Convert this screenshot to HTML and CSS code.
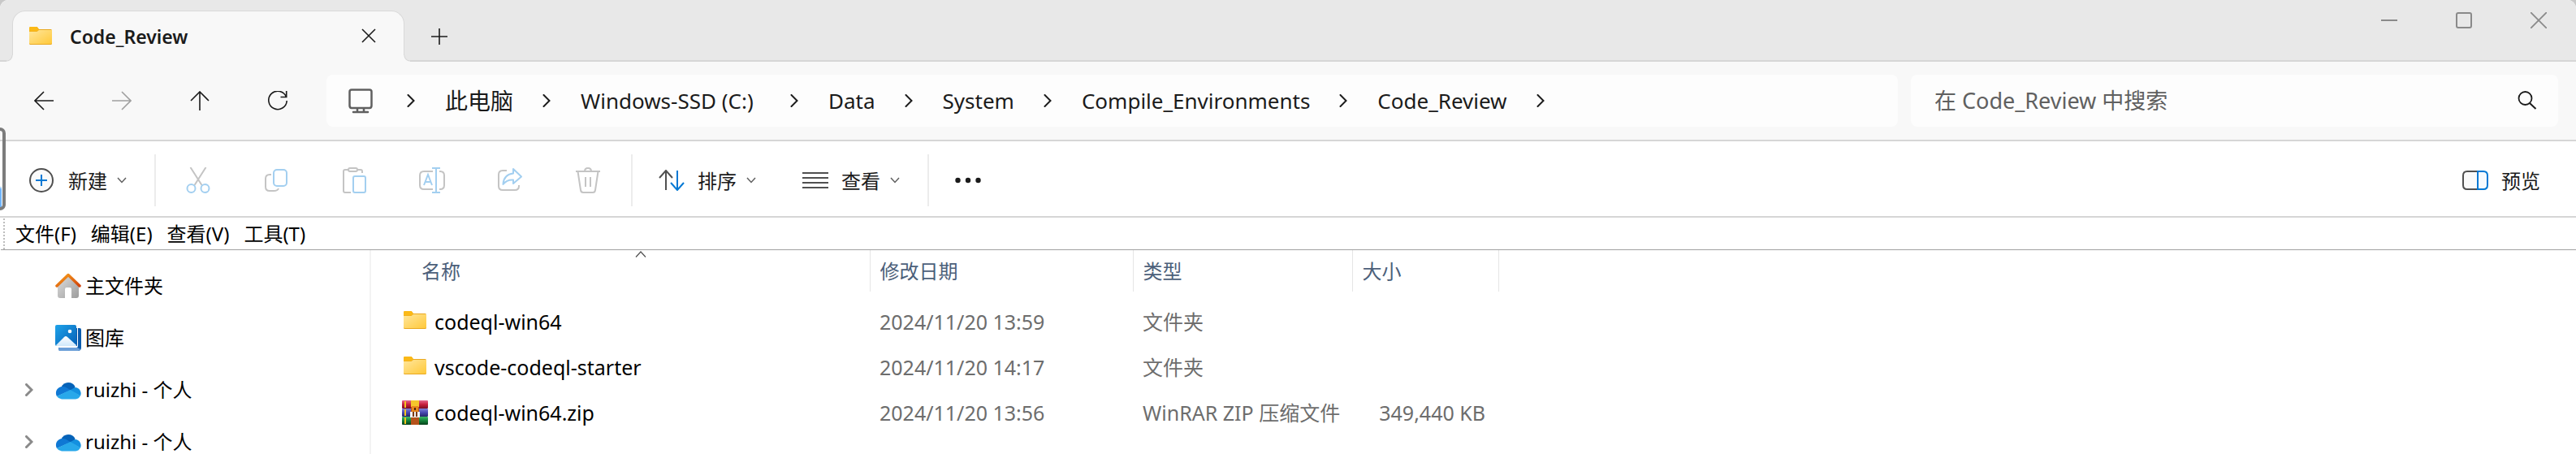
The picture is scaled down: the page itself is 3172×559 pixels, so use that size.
FILE: index.html
```html
<!DOCTYPE html>
<html lang="zh-CN">
<head>
<meta charset="utf-8">
<title>Code_Review</title>
<link rel="stylesheet" href="styles.css">
</head>
<body>
<svg class="defs" aria-hidden="true">
  <defs>
    <linearGradient id="g-folder" x1="0" y1="0" x2="1" y2="1"><stop offset="0" stop-color="#ffe69c"/><stop offset="1" stop-color="#ffc93a"/></linearGradient>
    <linearGradient id="g-roof" x1="0" y1="0" x2="1" y2="1"><stop offset="0" stop-color="#f9a11b"/><stop offset="1" stop-color="#d1430c"/></linearGradient>
    <linearGradient id="g-wall" x1="0" y1="0" x2="1" y2="1"><stop offset="0" stop-color="#dedede"/><stop offset="1" stop-color="#9c9c9c"/></linearGradient>
    <linearGradient id="g-photo" x1="0" y1="0" x2="1" y2="1"><stop offset="0" stop-color="#1fa3ea"/><stop offset="1" stop-color="#0560b6"/></linearGradient>
    <linearGradient id="g-hill" x1="0" y1="0" x2="0" y2="1"><stop offset="0" stop-color="#ffffff"/><stop offset="1" stop-color="#cfe8fb"/></linearGradient>
    <linearGradient id="g-red" x1="0" y1="0" x2="0" y2="1"><stop offset="0" stop-color="#e5668c"/><stop offset=".5" stop-color="#c81e3c"/><stop offset="1" stop-color="#7a0d22"/></linearGradient>
    <linearGradient id="g-blue" x1="0" y1="0" x2="0" y2="1"><stop offset="0" stop-color="#8080d8"/><stop offset=".5" stop-color="#4848b0"/><stop offset="1" stop-color="#26266a"/></linearGradient>
    <linearGradient id="g-green" x1="0" y1="0" x2="0" y2="1"><stop offset="0" stop-color="#3fb868"/><stop offset=".5" stop-color="#138038"/><stop offset="1" stop-color="#07401a"/></linearGradient>
    <symbol id="folder" viewBox="0 0 28 22">
      <path d="M0 1.500Q0 0 1.500 0H9.500L12 3H26.500Q28 3 28 4.500V20.500Q28 22 26.500 22H1.500Q0 22 0 20.500Z" fill="#e9a820"/>
      <path d="M0 1.500Q0 0 1.500 0H9.500Q11.500 1 11.500 3.500Q11 5 9.500 5.500H0Z" fill="#fbb917"/>
      <path d="M0 6H9.500L12 4H28V20Q28 21 26.500 21H1.500Q0 21 0 20Z" fill="url(#g-folder)"/>
    </symbol>
    <symbol id="cloud" viewBox="0 0 32 22">
      <path d="M7.500 7A9.500 9.500 0 0 1 24.500 6.500L22 14L12 12Z" fill="#0562b8"/>
      <path d="M8 6.500A8 8 0 0 0 2 18.500L19 11L13.500 7.500A9 9 0 0 0 8 6.500Z" fill="#0f78d4"/>
      <path d="M18 11L24.500 7.500A7.500 7.500 0 0 1 31 18Z" fill="#1490df"/>
      <path d="M2 18.500L18.500 10.500L31 17.500A7 7 0 0 1 25 22H8A8 8 0 0 1 2 18.500Z" fill="#28a8ea"/>
    </symbol>
    <symbol id="chev-right" viewBox="0 0 10 16"><path d="M1.500 1L8.500 8L1.500 15" fill="none" stroke="currentColor" stroke-width="2" stroke-linecap="round"/></symbol>
    <symbol id="chev-bold" viewBox="0 0 10 16"><path d="M1.500 1.500L8 8L1.500 14.500" fill="none" stroke="currentColor" stroke-width="3" stroke-linecap="round"/></symbol>
    <symbol id="chev-down" viewBox="0 0 12 8"><path d="M1 1L6 6.500L11 1" fill="none" stroke="currentColor" stroke-width="1.500"/></symbol>
  </defs>
</svg>

<div class="window">
  <header class="titlebar">
    <div class="tab">
      <svg class="folder-icon"><use href="#folder"/></svg>
      <span class="tab-title">Code_Review</span>
      <button class="tab-close" aria-label="关闭标签页"><svg width="18" height="18" viewBox="0 0 18 18"><path d="M1 1L17 17M17 1L1 17" stroke="#1b1b1b" stroke-width="1.600"/></svg></button>
    </div>
    <button class="tab-add" aria-label="新标签页"><svg width="20" height="20" viewBox="0 0 20 20"><path d="M10 0V20M0 10H20" stroke="#1b1b1b" stroke-width="1.600"/></svg></button>
    <div class="caption-buttons">
      <button aria-label="最小化"><svg width="20" height="20" viewBox="0 0 20 20"><path d="M0 10H20" stroke="#8a8a8a" stroke-width="2"/></svg></button>
      <button aria-label="最大化"><svg width="20" height="20" viewBox="0 0 20 20"><rect x="1" y="1" width="18" height="18" rx="2" fill="none" stroke="#8a8a8a" stroke-width="2"/></svg></button>
      <button aria-label="关闭"><svg width="20" height="20" viewBox="0 0 20 20"><path d="M0 0L20 20M20 0L0 20" stroke="#8a8a8a" stroke-width="1.800"/></svg></button>
    </div>
  </header>

  <div class="navbar">
    <div class="nav-buttons">
      <button aria-label="后退"><svg width="24" height="24" viewBox="0 0 24 24"><path d="M24 12H1M12 1L1 12L12 23"/></svg></button>
      <button aria-label="前进" disabled><svg width="24" height="24" viewBox="0 0 24 24"><path d="M0 12H23M12 1L23 12L12 23"/></svg></button>
      <button aria-label="向上"><svg width="24" height="24" viewBox="0 0 24 24"><path d="M12 24V1M1 12L12 1L23 12"/></svg></button>
      <button aria-label="刷新"><svg width="24" height="24" viewBox="0 0 24 24"><path d="M22.500 7.500A11.200 11.200 0 1 0 23.200 12M22.700 0V7.500H15.500"/></svg></button>
    </div>
    <nav class="address">
      <svg class="monitor" width="30" height="31" viewBox="0 0 30 31"><path d="M4 1.500H26Q28.500 1.500 28.500 4V21Q28.500 24 26 24H4Q1.500 24 1.500 21V4Q1.500 1.500 4 1.500ZM11 24V29M19 24V29M6 29H24" fill="none" stroke="#606060" stroke-width="2.500" stroke-linecap="round"/></svg>
      <svg class="sep"><use href="#chev-right"/></svg>
      <a class="crumb crumb-pc" href="#">此电脑</a>
      <svg class="sep"><use href="#chev-right"/></svg>
      <a class="crumb crumb-drive" href="#">Windows-SSD (C:)</a>
      <svg class="sep"><use href="#chev-right"/></svg>
      <a class="crumb" href="#">Data</a>
      <svg class="sep"><use href="#chev-right"/></svg>
      <a class="crumb" href="#">System</a>
      <svg class="sep"><use href="#chev-right"/></svg>
      <a class="crumb" href="#">Compile_Environments</a>
      <svg class="sep"><use href="#chev-right"/></svg>
      <a class="crumb" href="#">Code_Review</a>
      <svg class="sep"><use href="#chev-right"/></svg>
    </nav>
    <div class="search">
      <input type="text" aria-label="搜索" placeholder="在 Code_Review 中搜索">
      <svg width="24" height="24" viewBox="0 0 24 24"><circle cx="9.500" cy="9" r="8" fill="none" stroke="#1b1b1b" stroke-width="1.800"/><path d="M15 15L22.500 22" stroke="#1b1b1b" stroke-width="2"/></svg>
    </div>
  </div>

  <div class="toolbar">
    <button class="tool-new"><svg width="32" height="30" viewBox="0 0 32 30"><circle cx="15" cy="15" r="14" fill="#fafafa" stroke="#505050" stroke-width="2"/><path d="M15 8V22M8 15H22" stroke="#0078d4" stroke-width="2"/></svg><span>新建</span><svg class="caret"><use href="#chev-down"/></svg></button>
    <div class="tool-icons">
      <button disabled aria-label="剪切"><svg width="32" height="32" viewBox="0 0 32 32"><path d="M6.500 0L20.500 22M25.500 0L11.500 22" class="gray"/><circle cx="7.500" cy="26" r="5" class="blue"/><circle cx="24.500" cy="26" r="5" class="blue"/></svg></button>
      <button disabled aria-label="复制"><svg width="32" height="32" viewBox="0 0 32 32"><path d="M10 9H8Q3 9 3 14V24Q3 29 8 29H13Q18 29 19 26" class="gray"/><rect x="13" y="3" width="16" height="20" rx="4" class="blue"/></svg></button>
      <button disabled aria-label="粘贴"><svg width="32" height="32" viewBox="0 0 32 32"><path d="M9 3H5Q3 3 3 5V29Q3 31 5 31H12M20 3H24Q26 3 26 5V7" class="gray"/><rect x="9" y="1" width="11" height="4" rx="2" class="gray"/><rect x="15" y="11" width="15" height="20" rx="2" class="blue"/></svg></button>
      <button disabled aria-label="重命名"><svg width="32" height="32" viewBox="0 0 32 32"><path d="M17 5H6Q1 5 1 10V22Q1 27 6 27H17M25 5H26Q31 5 31 10V22Q31 27 26 27H25" class="gray"/><path d="M16 1H26M21 1V31M16 31H26M6 22L11 9L16 22M8 18H14" class="blue"/></svg></button>
      <button disabled aria-label="共享"><svg width="32" height="32" viewBox="0 0 32 32"><path d="M12 4H7Q2 4 2 9V23Q2 28 7 28H22Q27 28 27 23V22" class="gray"/><path d="M20 2L30 11.500L20 20V15.500Q12 15 7.500 21Q8 9 20 7.500Z" class="blue" stroke-linejoin="round"/></svg></button>
      <button disabled aria-label="删除"><svg width="32" height="32" viewBox="0 0 32 32"><path d="M1 5H31M3.500 5L7 28Q7.500 31 10 31H22Q24.500 31 25 28L28.500 5M12 5Q12 1 16 1T20 5M13 12V24M19 12V24" class="gray"/></svg></button>
    </div>
    <div class="tool-views">
      <button><svg width="32" height="26" viewBox="0 0 32 26"><path d="M9 25V1M1 10L9 1L17 10" fill="none" stroke="#505050" stroke-width="2"/><path d="M23 1V25M15 16L23 25L31 16" fill="none" stroke="#0078d4" stroke-width="2"/></svg><span>排序</span><svg class="caret"><use href="#chev-down"/></svg></button>
      <button><svg width="32" height="20" viewBox="0 0 32 20"><path d="M0 1H32M0 7H32M0 13H32M0 19H32" stroke="#505050" stroke-width="2"/></svg><span>查看</span><svg class="caret"><use href="#chev-down"/></svg></button>
    </div>
    <button class="tool-more" aria-label="查看更多"><svg width="32" height="8" viewBox="0 0 32 8"><g fill="#1b1b1b"><circle cx="3.500" cy="4" r="3.200"/><circle cx="16" cy="4" r="3.200"/><circle cx="28.500" cy="4" r="3.200"/></g></svg></button>
    <button class="tool-preview"><svg width="32" height="24" viewBox="0 0 32 24"><path d="M19 1H6Q1 1 1 6V18Q1 23 6 23H19" fill="#fafafa" stroke="#505050" stroke-width="2"/><path d="M19 1H26Q31 1 31 6V18Q31 23 26 23H19Z" fill="#f6fafe" stroke="#0078d4" stroke-width="2"/></svg><span>预览</span></button>
  </div>

  <div class="menubar">
    <button>文件(F)</button>
    <button>编辑(E)</button>
    <button>查看(V)</button>
    <button>工具(T)</button>
  </div>

  <div class="content">
    <aside class="tree">
      <a href="#"><span class="expander"></span><svg width="32" height="32" viewBox="0 0 32 32"><path d="M3 14L16 3L29 14V28Q29 31 26 31H20V20Q20 18 18 18H14Q12 18 12 20V31H6Q3 31 3 28Z" fill="url(#g-wall)"/><path d="M2 16L16 2.500L30 16" fill="none" stroke="url(#g-roof)" stroke-width="3.500" stroke-linecap="round" stroke-linejoin="round"/></svg><span>主文件夹</span></a>
      <a href="#"><span class="expander"></span><svg width="32" height="32" viewBox="0 0 32 32"><path d="M26 4H30Q32 4 32 6V28Q32 32 28 32H6Q4 32 4 29V28H26Z" fill="#0b5cad"/><path d="M4 29Q4 28 6 28H27L31 30Q30 32 28 32H6Q4 32 4 29Z" fill="#6b9fd8"/><path d="M0 26H27V4H28V26Q28 28 26 28H0Z" fill="#fff"/><rect width="26" height="26" rx="2" fill="url(#g-photo)"/><path d="M1 25L11 15Q13 13 15 15L26 25Q25 26 24 26H2Q1 26 1 25Z" fill="url(#g-hill)"/><circle cx="18" cy="8" r="2.300" fill="#fff"/></svg><span>图库</span></a>
      <a href="#"><span class="expander"><svg class="sep"><use href="#chev-bold"/></svg></span><svg class="cloud"><use href="#cloud"/></svg><span>ruizhi - 个人</span></a>
      <a href="#"><span class="expander"><svg class="sep"><use href="#chev-bold"/></svg></span><svg class="cloud"><use href="#cloud"/></svg><span>ruizhi - 个人</span></a>
    </aside>
    <main class="files">
      <table>
        <colgroup><col class="c-name"><col class="c-date"><col class="c-type"><col class="c-size"></colgroup>
        <thead>
          <tr><th class="name-head">名称<svg class="sort-mark" width="14" height="8" viewBox="0 0 14 8"><path d="M1 7.500L7 1L13 7.500" fill="none" stroke="#505050" stroke-width="1.200"/></svg></th><th>修改日期</th><th>类型</th><th>大小</th></tr>
        </thead>
        <tbody>
          <tr><td><div class="file"><svg class="folder-icon"><use href="#folder"/></svg>codeql-win64</div></td><td>2024/11/20 13:59</td><td>文件夹</td><td></td></tr>
          <tr><td><div class="file"><svg class="folder-icon"><use href="#folder"/></svg>vscode-codeql-starter</div></td><td>2024/11/20 14:17</td><td>文件夹</td><td></td></tr>
          <tr><td><div class="file"><svg width="32" height="30" viewBox="0 0 32 30"><rect width="32" height="10" rx="1" fill="url(#g-red)"/><rect y="10" width="32" height="10" rx="1" fill="url(#g-blue)"/><rect y="20" width="32" height="10" rx="1" fill="url(#g-green)"/><path d="M3 1H5V9H3ZM3 11H5V19H3ZM3 21H5V29H3Z" fill="#f2c420"/><path d="M11 0H21V30H11Z" fill="#b5521b"/><path d="M11 0H21V8H11Z" fill="#f5c62c"/><path d="M12 7H20V14H12Z" fill="#e8871e"/><path d="M15 9H17V12H15Z" fill="#4a2608"/><path d="M10 14H22V21H10Z" fill="#f2f2f2"/><path d="M13 14H15V20H13ZM17 14H19V20H17Z" fill="#7a3a14"/></svg>codeql-win64.zip</div></td><td>2024/11/20 13:56</td><td>WinRAR ZIP 压缩文件</td><td>349,440 KB</td></tr>
        </tbody>
      </table>
    </main>
  </div>
  <div class="edge-handle"></div>
</div>
</body>
</html>
```
FILE: styles.css
```css
* { box-sizing: border-box; }

body {
  margin: 0;
  background: #c8c8c8;
  font-family: "Noto Sans", "Noto Sans CJK SC", sans-serif;
  font-size: 24px;
  line-height: 32px;
  color: #000;
}

button {
  display: flex;
  align-items: center;
  justify-content: center;
  margin: 0;
  padding: 0;
  border: 0;
  background: none;
  font: inherit;
  color: #1b1b1b;
}

a { color: inherit; text-decoration: none; }
svg { display: block; flex: none; }
.defs { position: absolute; width: 0; height: 0; }

.window {
  position: relative;
  display: flex;
  flex-direction: column;
  height: 100vh;
  overflow: hidden;
  background: #fff;
  border-radius: 10px 10px 0 0;
}

/* title bar */
.titlebar {
  display: flex;
  flex: none;
  height: 76px;
  padding-left: 15px;
  background: #e8e8e8;
  border-bottom: 2px solid #d6d6d6;
}
.tab {
  position: relative;
  display: flex;
  align-items: center;
  width: 483px;
  margin: 13px 0 -2px;
  padding: 0 26px 2px 20px;
  background: #f8f8f8;
  border: 1px solid #d9d9d9;
  border-bottom: 0;
  border-radius: 16px 16px 0 0;
}
.tab::before,
.tab::after {
  content: "";
  position: absolute;
  bottom: 0;
  width: 8px;
  height: 8px;
}
.tab::before { right: 100%; background: radial-gradient(circle at 0 0, #e8e8e8 6px, #d6d6d6 7px, #f8f8f8 8px); }
.tab::after { left: 100%; background: radial-gradient(circle at 100% 0, #e8e8e8 6px, #d6d6d6 7px, #f8f8f8 8px); }
.folder-icon { width: 28px; height: 22px; }
.tab-title {
  flex: 1;
  padding: 2px 0 0 22px;
  font-size: 23px;
  font-weight: 600;
  color: #1b1b1b;
}
.tab-close { width: 34px; height: 34px; }
.tab-add { width: 86px; padding-top: 16px; }
.caption-buttons { display: flex; margin-left: auto; }
.caption-buttons button { width: 92px; height: 50px; }

/* navigation row */
.navbar {
  display: flex;
  flex: none;
  padding: 16px 22px 16px 6px;
  background: #f8f8f8;
  border-bottom: 2px solid #d6d6d6;
}
.nav-buttons { display: flex; margin-right: 12px; }
.nav-buttons button { width: 96px; height: 64px; }
.nav-buttons path { fill: none; stroke: #1b1b1b; stroke-width: 1.6; }
.nav-buttons button:disabled path { stroke: #a0a0a0; }
.address {
  display: flex;
  flex: 1;
  align-items: center;
  height: 64px;
  margin-right: 16px;
  padding-left: 27px;
  background: #fdfdfd;
  border-radius: 8px;
  font-size: 26px;
  color: #1b1b1b;
}
.monitor { margin-right: 42px; }
.sep { width: 10px; height: 16px; }
.crumb { margin: 0 36px 0 37px; }
.crumb-pc { font-size: 28px; }
.crumb-drive { min-width: 222px; }
.search {
  display: flex;
  align-items: center;
  width: 797px;
  height: 64px;
  padding: 0 26px 0 29px;
  background: #fdfdfd;
  border-radius: 8px;
}
.search input {
  flex: 1;
  min-width: 0;
  padding: 0;
  border: 0;
  outline: 0;
  background: none;
  font: inherit;
  font-size: 27px;
}
.search input::placeholder { color: #606060; opacity: 1; }

/* command bar */
.toolbar {
  display: flex;
  flex: none;
  align-items: center;
  height: 94px;
  padding-top: 4px;
  border-bottom: 2px solid #d6d6d6;
}
.toolbar > * { height: 64px; }
.toolbar button > svg + span { margin-left: 16px; }
.toolbar span { padding-top: 2px; }
.caret { width: 12px; height: 8px; margin-left: 12px; color: #606060; }
.tool-new { padding: 0 34px 0 36px; border-right: 2px solid #ececec; }
.tool-icons { display: flex; padding: 0 5px 0 4px; border-right: 2px solid #ececec; }
.tool-icons button { width: 96px; height: 64px; }
.tool-icons .gray { fill: none; stroke: #c4c4c4; stroke-width: 2; }
.tool-icons .blue { fill: none; stroke: #a3cff0; stroke-width: 2; }
.tool-views { display: flex; gap: 57px; padding: 0 34px 0 32px; border-right: 2px solid #ececec; }
.tool-views button { height: 64px; }
.tool-more { padding: 0 32px; }
.tool-preview { margin-left: auto; padding: 0 44px; }

/* classic menu */
.menubar {
  display: flex;
  flex: none;
  align-items: center;
  gap: 18px;
  height: 40px;
  margin-left: 1px;
  padding-left: 18px;
  background: radial-gradient(circle, #bdbdbd 1px, transparent 1px) 2px 0 / 4px 4px repeat-y;
  border-bottom: 1px solid #a0a0a0;
}
.menubar button { color: #000; }

/* panes */
.content { display: flex; flex: 1; min-height: 0; }
.tree {
  flex: none;
  width: 457px;
  padding-top: 12px;
  border-right: 2px solid #f3f3f3;
}
.tree a {
  display: flex;
  align-items: center;
  height: 64px;
  padding-left: 31px;
}
.tree a > span:last-child { margin-left: 5px; }
.expander { width: 37px; color: #8a8a8a; }
.cloud { width: 32px; height: 25px; }

.files { flex: 1; padding-left: 26px; }
table { table-layout: fixed; width: 1362px; border-collapse: collapse; }
.c-name { width: 588px; }
.c-date { width: 324px; }
.c-type { width: 270px; }
.c-size { width: 180px; }
th {
  height: 51px;
  padding: 0 12px;
  border-right: 1px solid #e5e5e5;
  font-weight: 400;
  text-align: left;
  color: #4c607a;
}
.name-head { position: relative; padding-left: 36px; }
.sort-mark { position: absolute; top: 1px; left: 299px; }
tbody::before { content: ""; display: block; height: 9px; }
td {
  height: 56px;
  padding: 0 12px;
  font-size: 25px;
  color: #6d6d6d;
  white-space: nowrap;
}
td:last-child { padding-right: 16px; text-align: right; }
.file { display: flex; align-items: center; color: #000; }
.file svg { margin-right: 8px; }
.file .folder-icon { margin: 0 10px 4px 2px; }

/* side handle that overlaps the window edge */
.edge-handle {
  position: absolute;
  left: 0;
  top: 157px;
  width: 7px;
  height: 102px;
  border: 4px solid #7c7c7c;
  border-left: 0;
  border-radius: 0 8px 8px 0;
  background: linear-gradient(transparent 68px, #6fb4fb 72px) left / 2px 100% no-repeat;
}
```
